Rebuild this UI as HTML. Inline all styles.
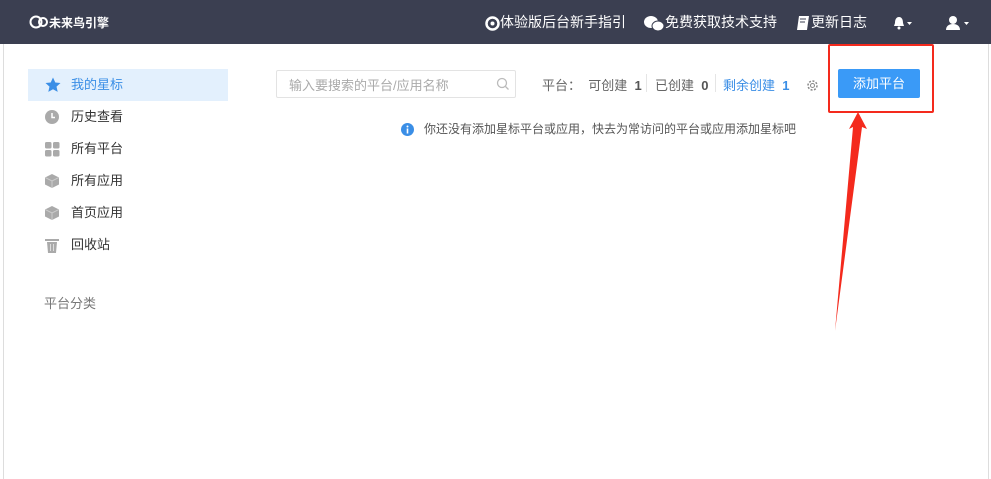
<!DOCTYPE html>
<html><head><meta charset="utf-8"><style>
*{margin:0;padding:0;box-sizing:border-box}
svg{display:block}
body{width:991px;height:479px;overflow:hidden;background:#fff;font-family:"Liberation Sans","Noto Sans CJK SC",sans-serif;position:relative;font-size:13px;color:#333}
.hd{position:absolute;left:0;top:0;width:991px;height:44px;background:#3b3f51;color:#fff}
.hd span{position:absolute;top:14px;font-size:14px;line-height:16px}
.abs{position:absolute}
.side{position:absolute;left:28px;width:200px;height:32px;line-height:32px;font-size:13px;color:#333}
.side i{position:absolute;left:17px;top:9px;width:14px;height:14px}
.side b{font-weight:normal;position:absolute;left:43px}
</style></head><body>
<div class="abs" style="left:3px;top:44px;width:1px;height:435px;background:#ddd"></div>
<div class="abs" style="left:988px;top:44px;width:1px;height:435px;background:#ddd"></div>
<div class="hd">
 <svg class="abs" style="left:29px;top:15px" width="20" height="14" viewBox="0 0 20 14"><circle cx="7" cy="7" r="5.5" fill="none" stroke="#fff" stroke-width="2"/><circle cx="14" cy="7" r="4" fill="none" stroke="#fff" stroke-width="2"/></svg>
 <span style="left:49px;top:15px;font-size:12px;font-weight:bold">未来鸟引擎</span>
 <svg class="abs" style="left:485px;top:16px" width="15" height="15"><circle cx="7.5" cy="7.5" r="6" fill="none" stroke="#fff" stroke-width="2.5"/><circle cx="7.5" cy="7.5" r="2" fill="#fff"/></svg>
 <span style="left:500px">体验版后台新手指引</span>
 <svg class="abs" style="left:643px;top:15px" width="22" height="17"><ellipse cx="8" cy="7" rx="7" ry="6" fill="#fff"/><ellipse cx="15" cy="11" rx="6" ry="5" fill="#fff" stroke="#3b3f51"/></svg>
 <span style="left:665px">免费获取技术支持</span>
 <svg class="abs" style="left:795px;top:15px" width="16" height="16"><path d="M4 1h10l-2 14H2z" fill="#fff"/><path d="M5 4h6M5 7h5" stroke="#3b3f51"/></svg>
 <span style="left:811px">更新日志</span>
 <svg class="abs" style="left:893px;top:16px" width="22" height="14"><path d="M6 1c-3 0-4 3-4 6l-1 3h10l-1-3c0-3-1-6-4-6z" fill="#fff"/><circle cx="6" cy="12" r="1.5" fill="#fff"/><path d="M14 6h5l-2.5 3z" fill="#fff"/></svg>
 <svg class="abs" style="left:946px;top:16px" width="26" height="14"><circle cx="7" cy="4" r="4" fill="#fff"/><path d="M0 14c0-4 3-6 7-6s7 2 7 6z" fill="#fff"/><path d="M18 6h5l-2.5 3z" fill="#fff"/></svg>
</div>
<div class="side" style="top:69px;background:#e3f0fd;color:#3a8ee6"><i><svg width="16" height="16" viewBox="0 0 16 16" style="margin-top:-1px"><path d="M8 0.5l2.3 5 5.2.5-4 3.6 1.2 5.3L8 12.2 3.3 14.9l1.2-5.3-4-3.6 5.2-.5z" fill="#3a8ee6"/></svg></i><b>我的星标</b></div>
<div class="side" style="top:101px"><i><svg width="14" height="14"><circle cx="7" cy="7" r="7" fill="#aaa"/><path d="M7 3v4.5h3" stroke="#fff" stroke-width="1.5" fill="none"/></svg></i><b>历史查看</b></div>
<div class="side" style="top:133px"><i><svg width="15" height="15"><rect x="0" y="0" width="6.5" height="6.5" rx="1.5" fill="#aaa"/><rect x="8" y="0" width="6.5" height="6.5" rx="1.5" fill="#aaa"/><rect x="0" y="8" width="6.5" height="6.5" rx="1.5" fill="#aaa"/><rect x="8" y="8" width="6.5" height="6.5" rx="1.5" fill="#aaa"/></svg></i><b>所有平台</b></div>
<div class="side" style="top:165px"><i><svg width="14" height="14"><path d="M7 0l7 3.5v7L7 14 0 10.5v-7z" fill="#aaa"/><path d="M0 3.5L7 7l7-3.5M7 7v7" stroke="#ccc" fill="none"/></svg></i><b>所有应用</b></div>
<div class="side" style="top:197px"><i><svg width="14" height="14"><path d="M7 0l7 3.5v7L7 14 0 10.5v-7z" fill="#aaa"/><path d="M0 3.5L7 7l7-3.5M7 7v7" stroke="#ccc" fill="none"/></svg></i><b>首页应用</b></div>
<div class="side" style="top:229px"><i><svg width="14" height="15"><rect x="0" y="1" width="14" height="2" fill="#aaa"/><path d="M2 4h10l-1 11H3z" fill="#aaa"/><path d="M5.5 6v7M8.5 6v7" stroke="#ddd"/></svg></i><b>回收站</b></div>
<div class="abs" style="left:44px;top:293px;color:#777;font-size:13px">平台分类</div>
<div class="abs" style="left:276px;top:70px;width:240px;height:28px;border:1px solid #e3e3e3;border-radius:2px"></div>
<div class="abs" style="left:289px;top:75px;color:#aaa;font-size:13px">输入要搜索的平台/应用名称</div>
<svg class="abs" style="left:496px;top:77px" width="14" height="14"><circle cx="6" cy="6" r="4.5" fill="none" stroke="#bbb" stroke-width="1.3"/><path d="M9.5 9.5l3 3" stroke="#bbb" stroke-width="1.3"/></svg>
<div class="abs" style="left:542px;top:75px;color:#666;font-size:13px">平台：&nbsp;&nbsp;可创建&nbsp;&nbsp;<b style="color:#555">1</b></div>
<div class="abs" style="left:646px;top:74px;width:1px;height:18px;background:#e5e5e5"></div>
<div class="abs" style="left:655px;top:75px;color:#666;font-size:13px">已创建&nbsp;&nbsp;<b style="color:#555">0</b></div>
<div class="abs" style="left:715px;top:74px;width:1px;height:18px;background:#e5e5e5"></div>
<div class="abs" style="left:723px;top:75px;color:#3a8ee6;font-size:13px">剩余创建&nbsp;&nbsp;<b>1</b></div>
<svg class="abs" style="left:806px;top:79px" width="13" height="13" viewBox="0 0 13 13"><circle cx="6.5" cy="6.5" r="4.5" fill="none" stroke="#888" stroke-width="1.5" stroke-dasharray="2 1.5"/><circle cx="6.5" cy="6.5" r="2" fill="none" stroke="#888"/></svg>
<div class="abs" style="left:838px;top:69px;width:82px;height:29px;background:#3a9af7;color:#fff;font-size:13px;text-align:center;line-height:29px;border-radius:2px">添加平台</div>
<div class="abs" style="left:828px;top:44px;width:106px;height:69px;border:2px solid #f42a1d;border-radius:2px"></div>
<svg class="abs" style="left:0;top:0" width="991" height="479"><path d="M858 112L867 129L862 127L835 331L853 127L849 129Z" fill="#f42a1d"/></svg>
<svg class="abs" style="left:401px;top:123px" width="13" height="13"><circle cx="6.5" cy="6.5" r="6.5" fill="#3a8ee6"/><rect x="5.7" y="5.5" width="1.6" height="5" fill="#fff"/><circle cx="6.5" cy="3.5" r="1" fill="#fff"/></svg>
<div class="abs" style="left:424px;top:120px;color:#555;font-size:12px">你还没有添加星标平台或应用，快去为常访问的平台或应用添加星标吧</div>
</body></html>
